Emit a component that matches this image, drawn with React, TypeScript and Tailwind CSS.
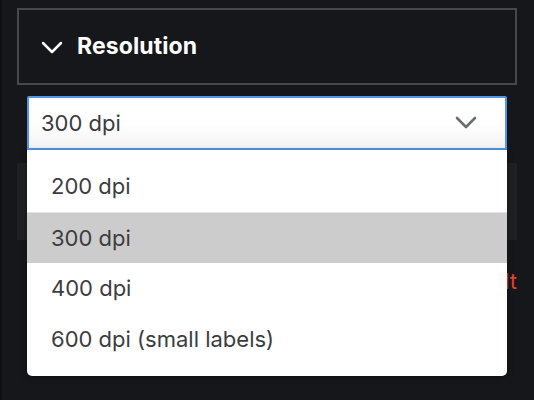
import React from "react";

const options = ["200 dpi", "300 dpi", "400 dpi", "600 dpi (small labels)"];

function Chevron({ className, stroke = 2.5 }: { className?: string; stroke?: number }) {
  return (
    <svg viewBox="0 0 22 14" className={className} fill="none">
      <polyline points="2,2 11,11 20,2" stroke="currentColor" strokeWidth={stroke} strokeLinecap="round" strokeLinejoin="round" />
    </svg>
  );
}

export default function App() {
  const selected = "300 dpi";
  return (
    <div
      className="w-[534px] h-[400px] overflow-hidden bg-[#16171b] border-l-2 border-[#0e0f12] pt-2"
      style={{ fontFamily: "Inter, 'Liberation Sans', sans-serif" }}
    >
      <div className="ml-[15px] w-[500px] flex flex-col">
        {/* Section header */}
        <div className="h-[77px] border-2 border-[#47484c] flex items-center px-[22px] gap-[14px]">
          <Chevron className="w-[22px] h-[14px] text-white mt-[2px]" />
          <span className="text-white font-bold text-[23px] tracking-[0.1px]">Resolution</span>
        </div>

        {/* Select */}
        <div className="relative mx-[10px] mt-[11px]">
          <div className="h-[54px] bg-gradient-to-b from-white via-white to-[#f3f3f3] border-2 border-[#5495e4] rounded-t-[2px] flex items-center justify-between pl-[12px] pr-[28px]">
            <span className="text-[#3a3b3e] text-[22px]">{selected}</span>
            <Chevron className="w-[22px] h-[14px] text-[#6b6c6f]" stroke={2.6} />
          </div>

          {/* Open dropdown list */}
          <div className="absolute left-0 right-0 top-[54px] z-10 bg-white rounded-b-[5px] shadow-[0_2px_6px_rgba(0,0,0,0.35)] py-[11px]">
            {options.map((o) => (
              <div
                key={o}
                className={
                  "h-[51px] flex items-center pl-[24px] text-[22px] text-[#3c3d41] " +
                  (o === selected ? "bg-[#cccccc] border-t border-[#e4e4e4]" : "")
                }
              >
                {o}
              </div>
            ))}
          </div>
        </div>

        {/* Collapsed section behind the list */}
        <div className="mt-[13px] h-[77px] bg-[#1f2024]" />

        {/* Reset link */}
        <div className="mt-[25px] flex justify-end">
          <span className="text-[#e0412f] text-[22px]">Reset to default</span>
        </div>
      </div>
    </div>
  );
}
